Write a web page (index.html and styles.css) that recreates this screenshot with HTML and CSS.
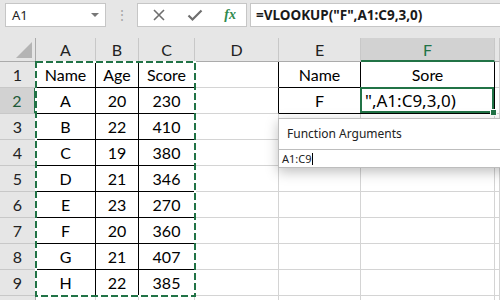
FILE: index.html
```html
<!DOCTYPE html>
<html lang="en">

<head>
    <meta charset="UTF-8">
    <title>VLOOKUP</title>
    <link rel="stylesheet" href="styles.css">
</head>

<body>

    <header class="bar">
        <div class="namebox">
            <span>A1</span>
            <span class="caret"></span>
        </div>
        <div class="dots">⋮</div>
        <div class="fxbox">
            <svg width="14" height="14" viewBox="0 0 14 14"><path d="M2 2 L12 12 M12 2 L2 12" stroke="#6e6e6e" stroke-width="1.6" fill="none"/></svg>
            <svg width="16" height="14" viewBox="0 0 16 14"><path d="M1.5 7.5 L5.5 11.5 L14.5 2.5" stroke="#6e6e6e" stroke-width="2.2" fill="none"/></svg>
            <span class="fx">fx</span>
        </div>
        <div class="formula">=VLOOKUP("F",A1:C9,3,0)</div>
    </header>

    <main class="sheet">
        <div class="corner"><span></span></div>
        <div class="hd">A</div>
        <div class="hd">B</div>
        <div class="hd">C</div>
        <div class="hd">D</div>
        <div class="hd">E</div>
        <div class="hd on">F</div>
        <div class="hd"></div>

        <div class="rh">1</div>
        <div class="c k">Name</div>
        <div class="c k">Age</div>
        <div class="c k">Score</div>
        <div class="c kr"></div>
        <div class="c k">Name</div>
        <div class="c k">Sore</div>
        <div class="c"></div>

        <div class="rh on">2</div>
        <div class="c k">A</div>
        <div class="c k">20</div>
        <div class="c k">230</div>
        <div class="c kr"></div>
        <div class="c k">F</div>
        <div class="c k active">",A1:C9,3,0)</div>
        <div class="c"></div>

        <div class="rh">3</div>
        <div class="c k">B</div>
        <div class="c k">22</div>
        <div class="c k">410</div>
        <div class="c"></div>
        <div class="c"></div>
        <div class="c"></div>
        <div class="c"></div>

        <div class="rh">4</div>
        <div class="c k">C</div>
        <div class="c k">19</div>
        <div class="c k">380</div>
        <div class="c"></div>
        <div class="c"></div>
        <div class="c"></div>
        <div class="c"></div>

        <div class="rh">5</div>
        <div class="c k">D</div>
        <div class="c k">21</div>
        <div class="c k">346</div>
        <div class="c"></div>
        <div class="c"></div>
        <div class="c"></div>
        <div class="c"></div>

        <div class="rh">6</div>
        <div class="c k">E</div>
        <div class="c k">23</div>
        <div class="c k">270</div>
        <div class="c"></div>
        <div class="c"></div>
        <div class="c"></div>
        <div class="c"></div>

        <div class="rh">7</div>
        <div class="c k">F</div>
        <div class="c k">20</div>
        <div class="c k">360</div>
        <div class="c"></div>
        <div class="c"></div>
        <div class="c"></div>
        <div class="c"></div>

        <div class="rh">8</div>
        <div class="c k">G</div>
        <div class="c k">21</div>
        <div class="c k">407</div>
        <div class="c"></div>
        <div class="c"></div>
        <div class="c"></div>
        <div class="c"></div>

        <div class="rh">9</div>
        <div class="c k">H</div>
        <div class="c k">22</div>
        <div class="c k">385</div>
        <div class="c"></div>
        <div class="c"></div>
        <div class="c"></div>
        <div class="c"></div>

        <div class="rh"></div>
        <div class="c"></div>
        <div class="c"></div>
        <div class="c"></div>
        <div class="c"></div>
        <div class="c"></div>
        <div class="c"></div>
        <div class="c"></div>

        <!-- copy marquee round A1:C9 -->
        <svg class="ants" width="162" height="238" viewBox="0 0 162 238">
            <rect x="1" y="1" width="159" height="234" fill="none" stroke="#fff" stroke-width="2"/>
            <rect x="1" y="1" width="159" height="234" fill="none" stroke="#217346" stroke-width="2" stroke-dasharray="7 3"/>
        </svg>

        <div class="tip">
            <div class="tip-title">Function Arguments</div>
            <div class="tip-input">A1:C9<span class="cursor"></span></div>
        </div>
    </main>

</body></html>
```

FILE: styles.css
```css
body {
    margin: 0;
    width: 500px;
    height: 300px;
    overflow: hidden;
    background-color: #fff;
    font-family: "Lato", "Noto Sans", sans-serif;
}

.bar {
    height: 38px;
    box-sizing: border-box;
    padding: 3px 0 0 5px;
    background-color: #e6e6e6;
    display: flex;
    align-items: flex-start;
    font-family: "Noto Sans", sans-serif;
}

.namebox {
    width: 101px;
    height: 24px;
    box-sizing: border-box;
    background-color: #fff;
    border: 1px solid #c6c6c6;
    display: flex;
    align-items: center;
    justify-content: space-between;
    padding: 0 6px 0 6px;
    font-size: 13px;
    color: #222;
}

.caret {
    width: 0;
    height: 0;
    border-left: 4px solid transparent;
    border-right: 4px solid transparent;
    border-top: 4px solid #777;
}

.dots {
    width: 31px;
    text-align: center;
    color: #a8a8a8;
    font-size: 14px;
    line-height: 24px;
}

.fxbox {
    width: 110px;
    height: 24px;
    box-sizing: border-box;
    background-color: #fff;
    border: 1px solid #c6c6c6;
    display: flex;
    align-items: center;
    justify-content: space-between;
    padding: 0 10px 0 14px;
}

.fx {
    font-family: "Liberation Serif", serif;
    font-style: italic;
    font-size: 14px;
    color: #2f8a4f;
    font-weight: bold;
}

.formula {
    flex: 1;
    height: 24px;
    margin-left: 3px;
    box-sizing: border-box;
    background-color: #fff;
    border: 1px solid #c6c6c6;
    border-right: none;
    padding-left: 5px;
    font-size: 13.5px;
    font-weight: bold;
    line-height: 22px;
    color: #1a1a1a;
}

.sheet {
    position: relative;
    display: grid;
    grid-template-columns: 36px 60px 43px 56px 84px 82px 134px 5px;
    grid-template-rows: 24px repeat(10, 26px);
}

.sheet > div {
    box-sizing: border-box;
    display: flex;
    align-items: center;
    justify-content: center;
    font-size: 16px;
}

.corner {
    background-color: #e6e6e6;
    border-right: 1px solid #ababab;
    border-bottom: 1px solid #ababab;
    align-items: flex-end !important;
    justify-content: flex-end !important;
    padding: 0 3px 3px 0;
}

.corner span {
    width: 0;
    height: 0;
    border-left: 16px solid transparent;
    border-bottom: 16px solid #b4b4b4;
}

.hd {
    background-color: #e6e6e6;
    border-right: 1px solid #c8c8c8;
    border-bottom: 1px solid #ababab;
    color: #222;
}

.rh {
    background-color: #e6e6e6;
    border-right: 1px solid #ababab;
    border-bottom: 1px solid #c8c8c8;
    color: #222;
}

.hd.on {
    background-color: #d2d2d2;
    border-bottom: 2px solid #217346;
    color: #217346;
}

.rh.on {
    background-color: #d2d2d2;
    border-right: 2px solid #217346;
    color: #1e5a38;
}

.c {
    border-right: 1px solid #d4d4d4;
    border-bottom: 1px solid #d4d4d4;
    color: #000;
}

.c.k {
    border-right-color: #000;
    border-bottom-color: #000;
}

.c.kr {
    border-right-color: #000;
}

.active {
    position: relative;
    justify-content: flex-start !important;
    padding-left: 4px;
    font-family: "Noto Sans", sans-serif;
    font-size: 17px !important;
}

.active::before {
    content: "";
    position: absolute;
    left: -1px;
    top: -1px;
    right: 0;
    bottom: 0;
    border: 2px solid #217346;
}

.active::after {
    content: "";
    position: absolute;
    right: -3px;
    bottom: -3px;
    width: 5px;
    height: 5px;
    background-color: #217346;
    border: 1px solid #fff;
}

.ants {
    position: absolute;
    left: 35px;
    top: 23px;
}

.tip {
    position: absolute;
    left: 278px;
    top: 80px;
    width: 240px;
    height: 50px;
    box-sizing: border-box;
    background-color: #fff;
    border: 1px solid #bdbdbd;
    box-shadow: 0 4px 12px rgba(0, 0, 0, 0.25);
    font-family: "Noto Sans", sans-serif;
    display: flex !important;
    flex-direction: column;
    align-items: stretch !important;
}

.tip-title {
    height: 30px;
    padding-left: 8px;
    font-size: 12px;
    line-height: 30px;
    color: #222;
}

.tip-input {
    border-top: 1px solid #bdbdbd;
    padding-left: 3px;
    font-size: 11px;
    line-height: 18px;
    color: #222;
}

.cursor {
    display: inline-block;
    width: 1px;
    height: 12px;
    background-color: #000;
    vertical-align: -2px;
}
```
